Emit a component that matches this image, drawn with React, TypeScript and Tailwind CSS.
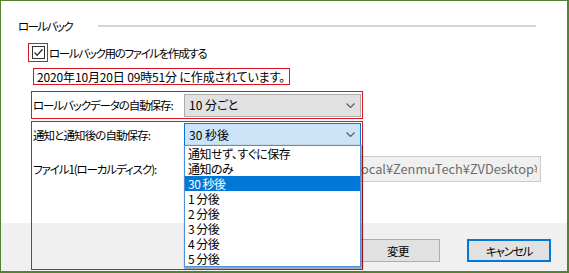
import React from "react";

function Chevron() {
  return (
    <svg width="9" height="5" viewBox="0 0 9 5" className="shrink-0">
      <polyline points="0.5,0.5 4.5,4.5 8.5,0.5" fill="none" stroke="#5a5a5a" strokeWidth="1.1" />
    </svg>
  );
}

const items = ["通知せず、すぐに保存", "通知のみ", "30 秒後", "1 分後", "2 分後", "3 分後", "4 分後", "5 分後"];

export default function App() {
  return (
    <div className="relative flex h-[273px] w-[569px] flex-col overflow-hidden border-l border-t border-r-2 border-b-2 border-[#548235] bg-white font-['Noto_Sans_CJK_JP','Noto_Sans',sans-serif] text-[11.5px] leading-[16px] text-black [font-feature-settings:'palt']">
      {/* main white area */}
      <div className="flex h-[222px] flex-col">
        {/* group heading */}
        <div className="mt-[17px] flex items-center pl-[17px] pr-[31px]">
          <span className="whitespace-nowrap tracking-[-1.6px]">ロールバック</span>
          <div className="ml-[26px] h-[2px] flex-1 bg-[#d4d4d4]" />
        </div>

        {/* checkbox row */}
        <div className="mt-[9px] flex items-center pl-[27px]">
          <div className="flex h-[19px] w-[20px] items-center justify-center border border-[#e0141e]">
            <div className="flex h-[13px] w-[13px] items-center justify-center border border-[#333333] bg-white">
              <svg width="11" height="11" viewBox="0 0 11 11">
                <polyline points="1.5,5.5 4.2,8.3 9.5,2.3" fill="none" stroke="#333333" strokeWidth="1.3" />
              </svg>
            </div>
          </div>
          <span className="ml-[1px] whitespace-nowrap tracking-[-1.35px]">ロールバック用のファイルを作成する</span>
        </div>

        {/* date */}
        <div className="mt-[6px] pl-[32px]">
          <div className="flex h-[17px] w-[257px] items-center whitespace-nowrap border border-[#e0141e] pl-[3px] text-[12px] tracking-[-0.15px]">
            2020年10月20日 09時51分 に作成されています。
          </div>
        </div>

        {/* auto save interval */}
        <div className="mt-[6px] pl-[30px]">
          <div className="flex h-[28px] w-[332px] items-center border border-[#e0141e]">
            <span className="w-[152px] shrink-0 whitespace-nowrap pl-[1px] tracking-[-1.1px]">ロールバックデータの自動保存:</span>
            <div className="flex h-[23px] w-[177px] shrink-0 items-center justify-between border border-[#adadad] bg-[#e1e1e1] pl-[4px] pr-[5px]">
              <span className="text-[12px]">10 分ごと</span>
              <Chevron />
            </div>
          </div>
        </div>

        {/* notify row */}
        <div className="mt-[4px] flex items-center pl-[32px]">
          <span className="w-[151px] shrink-0 whitespace-nowrap tracking-[-0.9px]">通知と通知後の自動保存:</span>
          <div className="flex h-[23px] w-[177px] shrink-0 items-center justify-between border border-[#0078d7] bg-[#cce4f7] pl-[4px] pr-[5px]">
            <span className="text-[12px]">30 秒後</span>
            <Chevron />
          </div>
        </div>

        {/* file row */}
        <div className="mt-[10px] flex items-center pl-[32px]">
          <span className="w-[151px] shrink-0 whitespace-nowrap tracking-[-1.1px]">ファイル1(ローカルディスク):</span>
          <div className="flex h-[26px] w-[357px] shrink-0 items-center border border-[#cccccc] bg-[#f0f0f0] px-[3px] text-[#6d6d6d]">
            <div className="flex flex-1 justify-end overflow-hidden">
              <span className="mr-[-4px] whitespace-nowrap text-[12.8px]">C:¥Users¥user¥AppData¥Local¥ZenmuTech¥ZVDesktop¥</span>
            </div>
          </div>
        </div>
      </div>

      {/* footer */}
      <div className="flex flex-1 items-start justify-end gap-[27px] bg-[#f0f0f0] pr-[16px] pt-[16px]">
        <button className="flex h-[23px] w-[84px] items-center justify-center border border-[#adadad] bg-[#e1e1e1] tracking-[-0.6px]">
          変更
        </button>
        <button className="flex h-[23px] w-[84px] items-center justify-center border-2 border-[#0078d7] bg-[#e1e1e1] tracking-[-1.2px]">
          キャンセル
        </button>
      </div>

      {/* annotation box around notify + file rows */}
      <div className="pointer-events-none absolute left-[30px] top-[120px] h-[149px] w-[332px] border border-[#e0141e]" />

      {/* open dropdown list */}
      <div className="absolute left-[183px] top-[144px] flex h-[122px] w-[177px] flex-col border border-[#4f8fd6] bg-white shadow-[1px_1px_1px_1px_rgba(0,0,0,0.3)]">
        {items.map((it) => (
          <div
            key={it}
            className={`flex h-[15px] items-center whitespace-pre pl-[3px] text-[12px] tracking-[-0.5px] ${it === "30 秒後" ? "bg-[#0078d7] text-white" : ""}`}
          >
            {it}
          </div>
        ))}
      </div>
    </div>
  );
}
